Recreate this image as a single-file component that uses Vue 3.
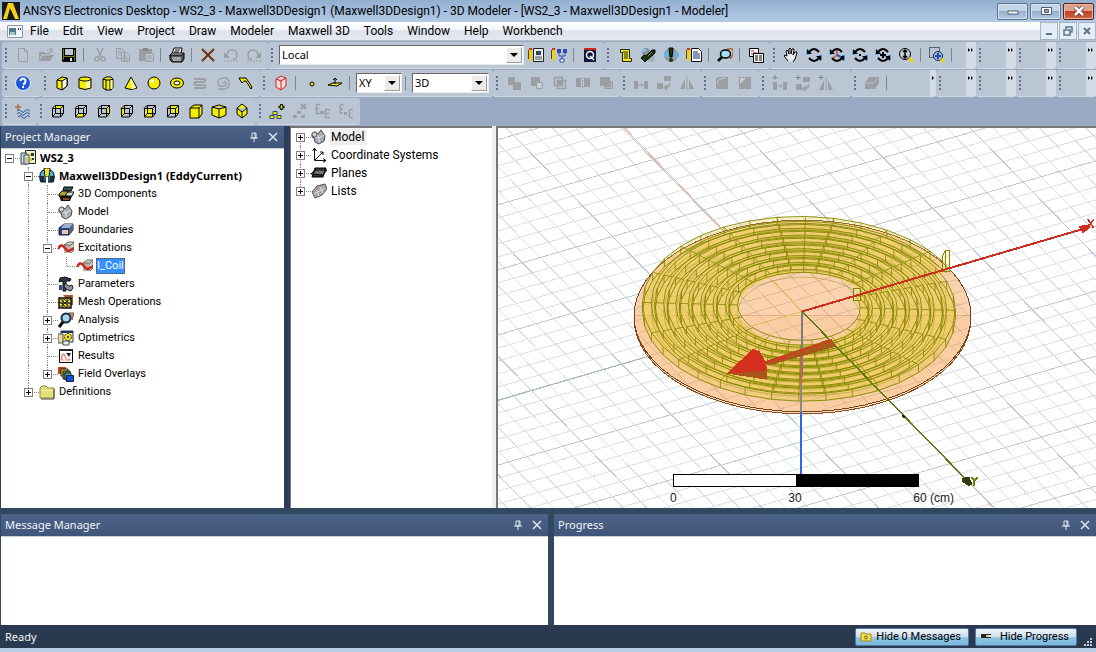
<script setup>
const G = '#9b9fa3'
const Y = '#f4f000'

const wire = (fill) =>
  `${fill}<path d="M2 5.5L5 2.500H13.500V10.500L10.500 14H2.500V5.500H10.500V14M10.500 5.500L13.500 2.500M5.500 2.500V10.500H13M2.500 13.500L5.500 10.500" fill="none" stroke="#000"/>`
const pencil = '<path d="M1 2h3v10l-1.500 3L1 12z" fill="#f7d000"/><path d="M1 1h3v2H1z" fill="#c33"/><path d="M.500 3v9" stroke="#444" fill="none"/>'
const coilWave = '<path d="M6 5l4-3h6l-3 3v8H6z" fill="#b9b0a6"/><path d="M6 5l4-3h6l-3 3zM13 5l3-3v8l-3 3" fill="#d8d0c8" stroke="#666"/><path d="M0 9q3-6 6-2t5 4l5-3" stroke="#c6281c" stroke-width="2.500" fill="none"/>'
const lump = '<path d="M1 5l3-2 3 2 3-4 4 6-1 5-5 3-4-2-1-4-2-1z" fill="#a9adb3" stroke="#44484e"/><path d="M4 8l4 1 5-3M8 9v5M6 5l2 4" stroke="#dfe3e8" fill="none"/><circle cx="3.500" cy="5.500" r="2.500" fill="#ccd0d6" stroke="#555"/>'
const rotate = (mid) =>
  `<path d="M0 3h3v5H0z" fill="#58b4ea"/><path d="M13 8h3v5h-3z" fill="#3a8ee0"/><path d="M3 5q5-6 10 0M13 11q-5 6-10 0" stroke="#000" stroke-width="2" fill="none"/><path d="M1 2v5h5zM15 14V9h-5z" fill="#000"/>${mid}`
const plus = '<path d="M3 0v5M0.500 2.500h5" stroke="#7f858c" fill="none"/>'

const icons = {
  fresh: `<path d="M3.500 1.500h6l3 3v10h-9zM9.500 1.500v3h3" fill="none" stroke="${G}"/>`,
  open: `<path d="M1 14V5h5l1 1h5v2h4l-4 6z" fill="${G}"/><path d="M2 12l2-4h8" stroke="#c3ccd6" fill="none"/><path d="M9 4q3-4 5 0M14 1v4h-3" fill="none" stroke="${G}"/>`,
  save: '<path d="M1 1h14v14H2l-1-1z" fill="#000"/><path d="M4 2h8v6H4z" fill="#bcc7d6"/><path d="M2 2h1v11H2zM13 3h1v11h-1zM3 9h10v1H3z" fill="#7c7c00"/><path d="M9 11h2v3H9z" fill="#dde"/>',
  cut: `<path d="M5 1l4 9M11 1L7 10" stroke="${G}" stroke-width="1.500"/><circle cx="5" cy="12" r="2" fill="none" stroke="${G}" stroke-width="1.500"/><circle cx="11" cy="12" r="2" fill="none" stroke="${G}" stroke-width="1.500"/>`,
  copy: `<path d="M1.500 1.500h5l3 3v7h-8zM6.500 5.500h5l3 3v6h-8z" fill="#bcc7d3" stroke="${G}"/><path d="M3 4h3M3 6h3M3 8h3M8 9h4M8 11h5M8 13h5" stroke="${G}"/>`,
  paste: `<path d="M1 2h13v12H1z" fill="${G}"/><path d="M5 1h5v3H5z" fill="#888"/><path d="M7.500 6.500h8v8h-8z" fill="#bcc7d3" stroke="${G}"/><path d="M9 9h5M9 11h5M9 13h3" stroke="${G}"/>`,
  print: '<path d="M5 1h8l-1 6H3z" fill="#fff" stroke="#000"/><path d="M6 3h5M5 5h5" stroke="#000"/><path d="M1 8l2-2h12l-2 3H1z" fill="#ddd" stroke="#000"/><path d="M1 8h12l2-2v6l-2 3H3l-2-2z" fill="#555" stroke="#000"/><path d="M3 11h9M4 13h8" stroke="#eee"/>',
  remove: '<path d="M2 2l12 12M14 2L2 14" stroke="#6b3010" stroke-width="2"/>',
  undo: `<path d="M4 9q0-6 5-6t5 5-4 4" fill="none" stroke="${G}" stroke-width="1.500"/><path d="M1 5v6h6z" fill="${G}"/><path d="M1 14h14" stroke="${G}" stroke-dasharray="2 1"/>`,
  redo: `<path d="M12 9q0-6-5-6T2 8t4 4" fill="none" stroke="${G}" stroke-width="1.500"/><path d="M15 5v6H9z" fill="${G}"/><path d="M1 14h14" stroke="${G}" stroke-dasharray="2 1"/>`,
  props: `${pencil}<path d="M5.500 1.500h10v13h-10z" fill="#e8eef4" stroke="#222"/><path d="M8 4h5v4H8z" fill="#345"/><path d="M7 10h7M7 12h7" stroke="#555"/>`,
  tree: `${pencil}<path d="M6 2h4v4H6zM12 2h4v4h-4z" fill="#2c4fae"/><path d="M8 6v3h6V6M11 9v4" stroke="#2c4fae" fill="none"/><path d="M9 12h4v3H9z" fill="#fff" stroke="#2c4fae"/>`,
  queue: '<path d="M2 1h12v14H2z" fill="#101840"/><path d="M2 1h12v2H2z" fill="#d02818"/><circle cx="8" cy="8" r="3.500" fill="none" stroke="#fff" stroke-width="1.500"/><path d="M8 9l4 4" stroke="#fff" stroke-width="1.500"/>',
  script: '<path d="M3.500 2.500h9v9h2v3h-9v-9h-2z" fill="#f3ea10" stroke="#222"/><path d="M6 5h5M7 7h4M7 9h4M7 11h4" stroke="#222"/>',
  validate: '<circle cx="6" cy="5" r="4" fill="#8f9298"/><circle cx="11" cy="11" r="4" fill="#a4b0ba"/><path d="M2 2h4v3H2z" fill="#7cc4e4"/><path d="M1 11l3-3 2 1 6-6h3v3l-8 7-2 2z" fill="#1d3417" stroke="#000"/><path d="M8 9l4-4" stroke="#5a9a40"/>',
  analyze: '<circle cx="8" cy="8" r="7" fill="#929aa2"/><path d="M1 5h4v5H1zM12 5h4v5h-4z" fill="#5cb8e6"/><path d="M6 1h4l-1 9H7z" fill="#183818" stroke="#000"/><circle cx="8" cy="13" r="2" fill="#183818"/>',
  notes: `${pencil}<path d="M5.500 1.500h7l3 3v10h-10z" fill="#fff" stroke="#111"/><path d="M7 5h5M7 7h7M7 9h7M7 11h7" stroke="#112a70"/>`,
  results: '<path d="M10 2h6v6l-3 4" fill="#c8d0d8" stroke="#b0602c" stroke-width="1.500"/><ellipse cx="8.500" cy="7" rx="5" ry="4" fill="#a4dcf0" stroke="#000" stroke-width="1.500"/><path d="M5 10l-4 4" stroke="#000" stroke-width="2.500"/>',
  report: '<path d="M1.500 1.500h9v8h-9z" fill="#fff" stroke="#000"/><path d="M3 4h3M5 6h4" stroke="#d02020"/><path d="M3 7h4" stroke="#2050c0"/><path d="M5.500 6.500h10v9h-10z" fill="#fff" stroke="#000"/><path d="M7 9h3M11 9h3M7 11h3M11 11h3M7 13h3M11 13h3" stroke="#000"/>',
  pan: '<path d="M5 14L1 9q0-2 3 0L3 4q1-2 2 0l1 3V2q1-2 2 0v5l1-5q2-1 2 1l-1 5 2-3q2-1 2 1l-2 6-2 3" fill="#e6ecf2" stroke="#000"/>',
  rot1: rotate(''),
  rot2: rotate('<path d="M8 8V3M8 8l-4 3" stroke="#c6501c" stroke-width="1.500"/><path d="M8 8l4 2" stroke="#2858c0" stroke-width="2"/>'),
  rot3: rotate('<path d="M7 7h2v2H7z"/>'),
  rot4: rotate('<path d="M8 5v6M5 8h6" stroke="#000" stroke-width="2"/>'),
  zoomer: '<circle cx="7" cy="7" r="5.500" fill="#c3ced8" stroke="#000"/><path d="M7 3v8M5 5l2-2 2 2M5 9l2 2 2-2" stroke="#000" stroke-width="1.500" fill="none"/><path d="M11 11l4 4" stroke="#e8d800" stroke-width="3"/>',
  fit: '<path d="M.500.500h10v10H.500z" fill="none" stroke="#000" stroke-dasharray="1 1"/><circle cx="9" cy="9" r="4.500" fill="#9ec2ee" stroke="#222"/><path d="M9 6v6M6 9h6" stroke="#2448b8" stroke-width="2"/><path d="M12 12l3 3" stroke="#e8d800" stroke-width="3"/>',
  help: '<circle cx="8" cy="8" r="7.500" fill="#1c55d8" stroke="#e4ecf6"/><path d="M5.500 6q0-2.500 2.500-2.500T10.500 6 8 9.500" stroke="#fff" stroke-width="2" fill="none"/><path d="M7 11h2v2H7z" fill="#fff"/>',
  box: `<path d="M3 5l5-3 5 1v8l-5 4-5-2z" fill="${Y}" stroke="#000"/><path d="M8 6v9l5-4V3z" fill="#fffce0" stroke="#000"/><path d="M3 5l5 1" stroke="#000"/>`,
  cyl: `<path d="M2 4v9q6 3 12 0V4z" fill="${Y}" stroke="#000"/><path d="M9 5h4v8H9z" fill="#f9f7b0"/><ellipse cx="8" cy="4" rx="6" ry="2" fill="${Y}" stroke="#000"/>`,
  poly: `<path d="M3 4v9l3 2h5l2-2V4z" fill="${Y}" stroke="#000"/><path d="M6 5v10M10 5v10" stroke="#000"/><path d="M10.500 5h2v9h-2z" fill="#f9f7b0"/><path d="M3 4l3-2h5l2 2-3 1H6z" fill="${Y}" stroke="#000"/>`,
  cone: `<path d="M8 2L2 13q6 3 12 0z" fill="${Y}" stroke="#000"/><path d="M8 3l1 11 4-1z" fill="#fffcd0"/>`,
  sphere: `<circle cx="8" cy="8" r="6" fill="${Y}" stroke="#000"/><circle cx="6" cy="6" r="2" fill="#fffcd0"/>`,
  torus: `<ellipse cx="8" cy="8" rx="6.500" ry="5" fill="${Y}" stroke="#000"/><ellipse cx="8" cy="8" rx="3" ry="2" fill="#fff" stroke="#000"/>`,
  helix: `<path d="M2 4h10q3 1 0 3H3q-2 2 1 3h8q3 1 0 3H2" fill="none" stroke="${G}" stroke-width="2"/>`,
  spiral: `<path d="M8 8q2-2 3 0t-3 3-5-3 5-5 6 5-6 6H3" fill="none" stroke="${G}" stroke-width="1.500"/>`,
  sweep: `<path d="M1 3h7l6 9-1 2-5-8H6l-2 2z" fill="${Y}" stroke="#000"/>`,
  redbox: '<path d="M3 4l5-3 5 2v8l-5 4-5-3zM3 4l5 2 5-3M8 6v9" fill="#f6dede" stroke="#e01818"/>',
  point: `<circle cx="8" cy="9" r="2" fill="${Y}" stroke="#000"/>`,
  plane: `<path d="M1 10l5-2h9l-5 3z" fill="${Y}" stroke="#000"/><path d="M8 9V3M6 5l2-2 2 2" stroke="#000" fill="none"/>`,
  unite: `<path d="M2 2h7v5h6v8H7v-5H2z" fill="${G}"/>`,
  subtract: `<path d="M2 2h9v9H2z" fill="${G}"/><path d="M7.500 7.500h6v6h-6z" fill="#c6cfd8" stroke="${G}"/>`,
  intersect: `<path d="M2.500 2.500h8v8h-8zM5.500 5.500h8v8h-8z" fill="none" stroke="${G}" stroke-width="1.500"/><path d="M6 6h4v4H6z" fill="${G}"/>`,
  split: `<path d="M1 3h5v9H1zM9 3h6v9H9z" fill="${G}"/><path d="M7.500 2v12" stroke="${G}" stroke-dasharray="2 1"/>`,
  imprint: `<path d="M2 2h10v9H2z" fill="${G}"/><path d="M6.500 11.500h6v-5h2v7h-8z" fill="#adb3b8" stroke="${G}"/>`,
  move: `<path d="M1 6h4v8H1zM11 6h4v8h-4z" fill="${G}"/><path d="M5 10h5M8 8l2 2-2 2" fill="none" stroke="${G}"/>`,
  turn: `<path d="M8 1h7v5H8zM1 8h6v6H1z" fill="${G}"/><path d="M14 8q-1 5-5 5M11 10l-3 3 3 2" fill="none" stroke="${G}" stroke-width="1.500"/>`,
  mirror: `<path d="M6 4v10H1zM10 4v10h5z" fill="${G}"/><path d="M8 2v13" stroke="${G}"/>`,
  fillet: `<path d="M2 3q4-2 12-1v12H2z" fill="${G}"/><path d="M3 8q2-5 8-5" stroke="#c6cfd8" fill="none"/>`,
  chamfer: `<path d="M2 2h12v12H2z" fill="${G}"/><path d="M3 9l6-6H3z" fill="#c6cfd8"/>`,
  surf: `<path d="M5 2h10v6l-4 6H1V8z" fill="${G}"/><path d="M2 8h8l4-5" stroke="#b8c0c8" fill="none"/>`,
  wave: '<path d="M3 1v6M0 4h6" stroke="#a0501c"/><path d="M2 8q2-3 4 0t4 0 5 0M2 11q2-3 4 0t4 0 5 0M3 14q2-3 4 0t4 0 4 0" fill="none" stroke="#2858a0"/>',
  v1: wire(`<path d="M3 5l3-3h8l-3 4H3z" fill="${Y}"/>`),
  v2: wire(`<path d="M3 13l3-3h7l-3 4H3z" fill="${Y}"/>`),
  v3: wire(`<path d="M10 5l4-3v9l-4 3z" fill="${Y}"/>`),
  v4: wire(`<path d="M2 5l4-3v9l-4 3z" fill="${Y}"/>`),
  v5: wire(`<path d="M2 5h9v9H2z" fill="${Y}"/>`),
  v6: wire(`<path d="M5 2h9v9H5z" fill="${Y}"/>`),
  v7: `<path d="M2 5l4-3h8v9l-3 4H2z" fill="${Y}" stroke="#000"/><path d="M2 5h9v10M11 5l3-3" stroke="#000" fill="none"/>`,
  v8: `<path d="M1 4l7-2 7 2v8l-7 3-7-3zM1 4l7 2 7-2M8 6v9" fill="${Y}" stroke="#000"/>`,
  v9: `<path d="M3 5l5-4 5 4v6l-5 4-5-4zM3 5l5 4 5-4M8 9v6" fill="${Y}" stroke="#000"/>`,
  addNode: `<path d="M12.500 1v6M9.500 4h6" stroke="#000" stroke-width="2.500"/><path d="M12.500 2v4M10.500 4h4" stroke="#c8c800"/><path d="M4 8.500h4v3H4zM1 12.500h4v3H1zM8 12.500h4v3H8z" fill="${Y}" stroke="#345"/>`,
  delNode: `<path d="M9 1l5 5M14 1L9 6" stroke="${G}" stroke-width="2"/><path d="M5 8h4v3H5zM1 12h4v3H1zM9 12h4v3H9z" fill="${G}"/>`,
  exp1: `<path d="M1.500 1v10M1 1.500h4M1 6h3M1 10.500h4M10.500 6v9M10 6.500h5M10 10.500h4M10 14.500h5" fill="none" stroke="${G}" stroke-width="1.500"/><path d="M5 8h4v3H5z" fill="${G}"/>`,
  exp2: `<path d="M6 1.500H4L2 3v2l2 1-2 1v3h3M15 6.500h-3l-1 2 1 2-1 2 1 2h3" fill="none" stroke="${G}" stroke-width="1.500"/><path d="M6 9h3v3H6z" fill="${G}"/>`,
  project: '<path d="M5.500.500h10v13h-10z" fill="#f4f2c8" stroke="#223"/><path d="M1 3h6v11H1z" fill="#c4dcdc" stroke="#345"/><path d="M4 5h5v9H4z" fill="#eef" stroke="#345"/><path d="M5 8h3M5 10h3M5 12h3" stroke="#a8a020"/><path d="M11 3h3v3h-3zM12 8h2v2h-2z" fill="#333"/><path d="M9 4h2v2H9zM10 8h2v3h-2z" fill="#d8c800"/>',
  design: '<path d="M1 8q0-6 5-6h1v12H2zM15 8q0-6-5-6H9v12h5z" fill="#4ab0dc" stroke="#000"/><path d="M5 0h6l-1 9H6z" fill="#f0e030" stroke="#222"/><path d="M0 8h5l1 6H1zM11 8h5l-1 6h-5z" fill="#1d2a3a"/><path d="M7 9h2v6H7z" fill="#fff"/>',
  components: '<path d="M6 1h9l-2 4H5z" fill="#2e5a50" stroke="#000"/><path d="M1 8l3-3h6l-2 5H1z" fill="#a8a820" stroke="#000"/><path d="M8 8l2-2h6l-2 4H8z" fill="#dcdcdc" stroke="#000"/><path d="M1 10h13l-2 5H3z" fill="#111"/><path d="M5 12h6v2H5z" fill="#8a4a20"/>',
  model: lump,
  boundary: '<path d="M1 6l5-4h9v6l-4 5H1z" fill="#24407c" stroke="#1a2a50"/><path d="M6 2h9l-3 4H3z" fill="#9ab4d8"/><path d="M4 8h6v4H4z" fill="#f0c8b0"/><path d="M11 6l4-4v6l-4 5z" fill="#59606e"/>',
  excite: coilWave,
  params: '<path d="M2 2l5-1 6 2-1 2H8v10H5V5L1 6z" fill="#28384a" stroke="#111"/><path d="M7 7l4 3 3-1 1 3-2 3-3-1-4-3z" fill="#8a949e" stroke="#222"/><path d="M1 9h3v5H1z" fill="#2c4a8c"/>',
  mesh: '<path d="M5 1h10v10h-2" fill="#a05c30"/><path d="M1 4h12v10H1z" fill="#f0e840" stroke="#111" stroke-width="1.500"/><path d="M1 9h12M5 4v10M9 4v10M1 4l12 10M13 4L1 14M5 4l8 7M1 7l8 7" stroke="#222" fill="none"/>',
  analysis: '<path d="M10 1h6l-2 7" fill="#c49a80" stroke="#764a30"/><circle cx="8" cy="6" r="4.500" fill="#a8d4ee" stroke="#1c2c3c" stroke-width="2"/><path d="M5 10l-4 5" stroke="#111" stroke-width="3"/>',
  opti: '<path d="M3 1h12v11H3z" fill="#f2eec0" stroke="#24365c"/><path d="M3 1h12v2H3z" fill="#24365c"/><path d="M0 4h5v9H0z" fill="#e8d890" stroke="#555"/><path d="M5 11h6v4H5z" fill="#e8f0f4" stroke="#355"/><circle cx="10" cy="7" r="3.500" fill="#f0e020" stroke="#222" stroke-dasharray="2 1"/><circle cx="10" cy="7" r="1" fill="#222"/>',
  plot: '<path d="M1.500 1.500h13v13h-13z" fill="#fff" stroke="#000"/><path d="M1 1h14v2H1z" fill="#223"/><path d="M3 12q2-10 4-4t5 3" fill="none" stroke="#d05030"/><path d="M8 5l3 4 2-4" fill="#222"/><path d="M4 6v7M3 12h10" stroke="#e8a088"/>',
  overlay: '<path d="M0 1h8v7H0z" fill="#c4421c"/><path d="M3 3h7v7H3z" fill="#e6cc10" stroke="#222"/><path d="M5 5h7v8H5z" fill="#4a8a50" stroke="#222"/><path d="M7 7h6v7H7z" fill="#50a8d8" stroke="#222"/><path d="M8.500 9.500h7v6h-7z" fill="#1450d8" stroke="#123"/>',
  folder: '<path d="M1 4l2-2h4l2 2h6v10H1z" fill="#e4de78" stroke="#8a8640"/><path d="M2 6h12v1H2z" fill="#f8f4b8"/><path d="M15 5v10H2" stroke="#444" fill="none"/>',
  axes: '<path d="M3.500 1v12.500H15M1.500 4l2-3 2 3M12 11.500l3 2-3 2M4 13l8-8M9 5h3v3" fill="none" stroke="#111"/>',
  planes: '<path d="M4 3h11l-3 9H1z" fill="#30363a" stroke="#000"/><path d="M5 5h8M4 7h9M3 9h9" stroke="#aab4b0"/><path d="M0 9l4-4h12l-4 5z" fill="none" stroke="#000"/>',
  lists: '<path d="M1 9l5-6 8-2 2 5-5 6-7 3z" fill="#a4a6a8" stroke="#555"/><path d="M5 6l3 7M9 4l3 6M3 11l11-6" stroke="#dcdcdc"/><path d="M3 9l5-5" stroke="#b86a40"/>',
}

const select = (label, value, size) => ({ select: true, label, value, size })
const sep = '|'
const rows = [
  {
    bands: [
      { items: ['fresh', 'open', 'save', sep, 'cut', 'copy', 'paste', sep, 'print', sep, 'remove', 'undo', 'redo'] },
      { items: [select('Coordinate system', 'Local', 'long'), 'props', 'tree', sep, 'queue'] },
      { items: ['script', 'validate', 'analyze', 'notes', sep, 'results', sep, 'report'] },
      { items: ['pan', 'rot1', 'rot2', 'rot3', 'rot4', 'zoomer', sep, 'fit', sep], grow: true, more: true },
      { items: [], more: true, small: true },
      { items: [], more: true, small: true },
      { items: [], more: true, small: true },
    ],
  },
  {
    bands: [
      { items: ['help'], roomy: true },
      { items: ['box', 'cyl', 'poly', 'cone', 'sphere', 'torus', 'helix', 'spiral', 'sweep'] },
      { items: ['redbox', sep, 'point', 'plane', sep, select('Drawing plane', 'XY', 'short'), sep, select('Movement mode', '3D', 'medium')] },
      { items: ['unite', 'subtract', 'intersect', 'split', 'imprint'] },
      { items: ['move', 'turn', 'mirror'] },
      { items: ['fillet', 'chamfer'] },
      { items: ['+move', '+turn', '+mirror'], loose: true },
      { items: ['surf', sep], grow: true, more: true, single: true },
      { items: [], more: true, small: true },
      { items: [], more: true, small: true },
      { items: [], more: true, small: true },
      { items: [], more: true, small: true },
    ],
  },
  {
    bands: [
      { items: ['wave'] },
      { items: ['v1', 'v2', 'v3', 'v4', 'v5', 'v6', 'v7', 'v8', 'v9'] },
      { items: ['addNode', 'delNode', 'exp1', 'exp2'] },
    ],
  },
]
const glyph = (name) => (name[0] === '+' ? plus + `<g transform="translate(0 1)">${icons[name.slice(1)]}</g>` : icons[name])

const menus = ['File', 'Edit', 'View', 'Project', 'Draw', 'Modeler', 'Maxwell 3D', 'Tools', 'Window', 'Help', 'Workbench']

// Guide cells: e = empty, v = passing line, t = branch, l = last branch; a sign adds an expander.
const projectTree = [
  { cells: ['o-'], icon: 'project', text: 'WS2_3', bold: true },
  { cells: ['e', 't-'], icon: 'design', text: 'Maxwell3DDesign1 (EddyCurrent)', bold: true },
  { cells: ['e', 'v', 't'], icon: 'components', text: '3D Components' },
  { cells: ['e', 'v', 't'], icon: 'model', text: 'Model' },
  { cells: ['e', 'v', 't'], icon: 'boundary', text: 'Boundaries' },
  { cells: ['e', 'v', 't-'], icon: 'excite', text: 'Excitations' },
  { cells: ['e', 'v', 'v', 'l'], icon: 'excite', text: 'I_Coil', selected: true },
  { cells: ['e', 'v', 't'], icon: 'params', text: 'Parameters' },
  { cells: ['e', 'v', 't'], icon: 'mesh', text: 'Mesh Operations' },
  { cells: ['e', 'v', 't+'], icon: 'analysis', text: 'Analysis' },
  { cells: ['e', 'v', 't+'], icon: 'opti', text: 'Optimetrics' },
  { cells: ['e', 'v', 't'], icon: 'plot', text: 'Results' },
  { cells: ['e', 'v', 'l+'], icon: 'overlay', text: 'Field Overlays' },
  { cells: ['e', 'l+'], icon: 'folder', text: 'Definitions' },
]
const modelTree = [
  { cells: ['b+'], icon: 'model', text: 'Model', current: true },
  { cells: ['t+'], icon: 'axes', text: 'Coordinate Systems' },
  { cells: ['t+'], icon: 'planes', text: 'Planes' },
  { cells: ['l+'], icon: 'lists', text: 'Lists' },
]
const trees = [projectTree, modelTree]

// Scene projection: world x/y in major grid units, z in pixels upwards.
const O = [802, 311]
const U = [90, -26.2]
const V = [49.5, 50.5]
const at = (x, y, z = 0) => [O[0] + x * U[0] + y * V[0], O[1] + x * U[1] + y * V[1] - z]
const fmt = (p) => `${p[0].toFixed(1)} ${p[1].toFixed(1)}`
const line = (a, b) => `M${fmt(a)}L${fmt(b)}`

let minor = ''
let major = ''
for (let i = -50; i <= 50; i++) {
  const d = line(at(i / 5, -10), at(i / 5, 10)) + line(at(-10, i / 5), at(10, i / 5))
  if (i % 5) minor += d
  else major += d
}

const SEG = 36
const TURNS = 8
const PITCH = 0.12
const WIDTH = 0.085
const HEIGHT = 8
const radius = (k) => 1.6 - (PITCH * k) / SEG
const polar = (r, k, z) => {
  const a = (-2 * Math.PI * k) / SEG
  return at(r * Math.cos(a), r * Math.sin(a), z)
}
const base = -3
const top = base + HEIGHT
const spiral = (w, z) => {
  let d = ''
  for (let k = 0; k <= SEG * TURNS; k++) d += (k ? 'L' : 'M') + fmt(polar(radius(k) - w, k, z))
  return d
}
const coil = spiral(0, top) + spiral(0, base) + spiral(WIDTH, top)
let posts = ''
for (let k = 0; k <= SEG * TURNS; k++) {
  const r = radius(k)
  posts += line(polar(r, k, base), polar(r, k, top))
  if (k % 2) posts += line(polar(r, k, top), polar(r - WIDTH, k, top))
}
const inner = spiral(WIDTH, base)
const ring = (from, w, z) => {
  let d = ''
  for (let k = from; k <= from + SEG; k++) d += (k > from ? 'L' : 'M') + fmt(polar(radius(k) - w, k, z))
  return d + 'Z'
}
const hole = ring(SEG * (TURNS - 1), WIDTH, 1)
const coilTop = ring(0, 0, top) + hole
const coilBase = ring(0, 0, base) + hole
const ticks = ['0', '30', '60 (cm)']
</script>

<template>
  <div class="desktop">
    <header class="title">
      <svg class="logo" viewBox="0 0 18 18"><rect width="18" height="18" fill="#181818" /><path d="M1 17L6 1h5l6 16h-5L8 6 5 17z" fill="#f5d21a" /><path d="M9 8l4 9H6z" fill="#181818" /></svg>
      <h1>ANSYS Electronics Desktop - WS2_3 - Maxwell3DDesign1 (Maxwell3DDesign1) - 3D Modeler - [WS2_3 - Maxwell3DDesign1 - Modeler]</h1>
      <div class="winbtns">
        <button aria-label="Minimize"><svg viewBox="0 0 28 14"><rect x="9" y="7" width="10" height="3" fill="#fff" stroke="#4d5c70" /></svg></button>
        <button aria-label="Maximize"><svg viewBox="0 0 28 14"><path d="M9.500 3.500h10v7h-10z" fill="#fff" stroke="#4d5c70" /><path d="M12.500 5.500h4v3h-4z" fill="#8fa8c6" stroke="#4d5c70" /></svg></button>
        <button class="close" aria-label="Close"><svg viewBox="0 0 28 14"><path d="M10 3l8 8M18 3l-8 8" stroke="#5a3030" stroke-width="4" /><path d="M10 3l8 8M18 3l-8 8" stroke="#fff" stroke-width="2.500" /></svg></button>
      </div>
    </header>

    <nav class="menubar">
      <svg class="docicon" viewBox="0 0 16 13"><path d="M.500.500h15v12H.500z" fill="#f4f7fa" stroke="#8d99a6" /><path d="M2 3h7v7H2z" fill="#4e7a8c" /><path d="M3 7h5v3H3z" fill="#a8c8c0" /><path d="M11 3h1v2h-1zM13 3h1v2h-1z" fill="#345" /></svg>
      <button v-for="m in menus" :key="m">{{ m }}</button>
      <div class="docbtns">
        <button aria-label="Minimize document"><svg viewBox="0 0 16 16"><path d="M5 11h6" stroke="#5e7389" stroke-width="2" /></svg></button>
        <button aria-label="Restore document"><svg viewBox="0 0 16 16"><path d="M6 6V4h6v5h-2M4 7h6v5H4z" fill="none" stroke="#5e7389" stroke-width="1.500" /></svg></button>
        <button aria-label="Close document"><svg viewBox="0 0 16 16"><path d="M5 5l6 6M11 5l-6 6" stroke="#5e7389" stroke-width="2" /></svg></button>
      </div>
    </nav>

    <div class="toolbars">
      <div v-for="(row, r) in rows" :key="r" class="toolrow">
        <div v-for="(band, b) in row.bands" :key="b" class="band" :class="{ grow: band.grow, small: band.small, roomy: band.roomy, loose: band.loose }">
          <i class="grip"></i>
          <template v-for="(item, i) in band.items" :key="i">
            <i v-if="item === '|'" class="sep"></i>
            <span v-else-if="item.select" class="combo" :class="item.size">
              <select :aria-label="item.label"><option>{{ item.value }}</option></select>
            </span>
            <button v-else class="tool" :aria-label="item"><svg viewBox="0 0 16 16" v-html="glyph(item)"></svg></button>
          </template>
          <button v-if="band.more" class="more" :class="{ single: band.single }" aria-label="More buttons">
            <svg v-if="band.single" viewBox="0 0 6 4"><path d="M2 0v4l2-2z" /></svg>
            <svg v-else viewBox="0 0 6 4"><path d="M0 0v4l2-2zM3 0v4l2-2z" /></svg>
          </button>
        </div>
      </div>
    </div>

    <main class="work">
      <section class="pane project">
        <header class="bar"><h2>Project Manager</h2>
          <button aria-label="Pin"><svg viewBox="0 0 10 10"><path d="M3 1h4v5H3zM6 1v5M1 6h8M5 6v4" fill="none" stroke="#dfe6f0" /></svg></button>
          <button aria-label="Close"><svg viewBox="0 0 10 10"><path d="M1 1l8 8M9 1L1 9" stroke="#dfe6f0" stroke-width="1.500" /></svg></button>
        </header>
        <ul class="tree">
          <li v-for="n in trees[0]" :key="n.text" :class="{ bold: n.bold, selected: n.selected }">
            <span v-for="(c, i) in n.cells" :key="i" class="cell" :class="c[0]"><b v-if="c[1]" :class="{ plus: c[1] === '+' }"></b></span>
            <svg class="node" viewBox="0 0 16 16" v-html="icons[n.icon]"></svg><span class="label">{{ n.text }}</span>
          </li>
        </ul>
      </section>
      <section class="objects">
        <ul class="tree">
          <li v-for="n in trees[1]" :key="n.text" :class="{ current: n.current }">
            <span v-for="(c, i) in n.cells" :key="i" class="cell" :class="c[0]"><b v-if="c[1]" :class="{ plus: c[1] === '+' }"></b></span>
            <svg class="node" viewBox="0 0 16 16" v-html="icons[n.icon]"></svg><span class="label">{{ n.text }}</span>
          </li>
        </ul>
      </section>
      <section class="view">
        <svg class="scene" viewBox="498 128 598 379" preserveAspectRatio="xMidYMid slice">
          <g fill="none" shape-rendering="crispEdges">
            <path :d="minor" stroke="#dce1e3" />
            <path :d="major" stroke="#c3c7d6" />
            <path d="M802 311L498 400" stroke="#a3bda9" />
            <path d="M802 311L625 128M968 481L992 506" stroke="#e8bda4" />
          </g>
          <g shape-rendering="crispEdges">
            <path d="M634.500 315v3a168 95 0 0 0 336 0v-3z" fill="#fde0c0" stroke="#8a4a1c" />
            <ellipse cx="802.500" cy="315.500" rx="168" ry="95.500" fill="#f9c89c" fill-opacity=".82" stroke="#74401a" />
            <g clip-path="url(#disc)" fill="none" stroke="#b4906c" stroke-opacity=".3">
              <path :d="minor" />
              <path :d="major" />
            </g>
            <clipPath id="disc"><ellipse cx="802.500" cy="315.500" rx="166" ry="94" /></clipPath>
            <path :d="coilTop" fill="#f0d840" fill-opacity=".28" fill-rule="evenodd" />
            <path :d="coilBase" fill="#e6c830" fill-opacity=".3" fill-rule="evenodd" />
            <g fill="none" stroke="#858600" shape-rendering="geometricPrecision">
              <path :d="inner" stroke-opacity=".5" stroke-width=".8" />
              <path :d="coil" stroke-width=".9" />
              <path :d="posts" stroke-width=".8" />
            </g>
            <path d="M942 256l3-6h4v21h-7zM945 250v18M853 288h7v12h-7z" fill="#f4f0b0" fill-opacity=".4" stroke="#858600" />
            <path d="M802 311l-27-29M802 311l-55 16" stroke="#dcbc60" fill="none" />
            <path d="M802 311v65" stroke="#7b7b80" stroke-width="2" />
            <path d="M801 350v34" stroke="#b86a50" stroke-width="2" />
            <path d="M801 384v27" stroke="#8a8a80" stroke-width="2" />
            <path d="M801 411v64" stroke="#2e68e6" stroke-width="2" />
            <path d="M802 311l166 170" stroke="#5f7a10" stroke-width="1.500" />
            <path d="M902 414l2 3" stroke="#111" stroke-width="2" />
            <path d="M764 361l67-23 5 8-68 19z" fill="#a85a18" />
            <path d="M766 362l68-23M768 361l20-4" stroke="#d23a24" stroke-width="2" stroke-dasharray="9 3" />
            <path d="M727 373l40-8v14z" fill="#a8541a" />
            <path d="M727 373l26-25 7 3 6 11v8z" fill="#d43020" />
            <path d="M802 311l286-84" stroke="#d02c1e" stroke-width="2" />
            <path d="M1078 226l10-2 1 4-7 5z" fill="#d02c1e" />
            <path d="M1087 219l6 9M1093 219l-6 9" stroke="#d02c1e" stroke-width="1.500" />
            <path d="M962 477l7-1 3 8-4 1-6-4z" fill="#2c3c10" />
            <path d="M971 476l3 4 3-4M974 480v5" fill="none" stroke="#6f8010" stroke-width="2" />
          </g>
        </svg>
        <div class="scale">
          <div class="rule"><i></i><i></i></div>
          <div class="ticks"><span v-for="t in ticks" :key="t">{{ t }}</span></div>
        </div>
      </section>
    </main>

    <div class="docked">
      <section v-for="name in ['Message Manager', 'Progress']" :key="name" class="pane">
        <header class="bar"><h2>{{ name }}</h2>
          <button aria-label="Pin"><svg viewBox="0 0 10 10"><path d="M3 1h4v5H3zM6 1v5M1 6h8M5 6v4" fill="none" stroke="#dfe6f0" /></svg></button>
          <button aria-label="Close"><svg viewBox="0 0 10 10"><path d="M1 1l8 8M9 1L1 9" stroke="#dfe6f0" stroke-width="1.500" /></svg></button>
        </header>
      </section>
    </div>

    <footer class="status">
      <span>Ready</span>
      <button class="messages"><svg viewBox="0 0 12 10"><path d="M1 1h4l1 1h5v7H1z" fill="#f4e04c" stroke="#a08a20" /><circle cx="6" cy="5.500" r="1.500" fill="none" stroke="#776010" /></svg>Hide 0 Messages</button>
      <button><svg viewBox="0 0 12 10"><path d="M1 2h10v4H1z" fill="#222" /><path d="M6 3h2v2H6z" fill="#e8d030" /><path d="M8 3h3v2H8z" fill="#dde" /></svg>Hide Progress</button>
      <svg class="sizer" viewBox="0 0 10 10"><path d="M7 0h2v2H7zM4 3h2v2H4zM7 3h2v2H7zM1 6h2v2H1zM4 6h2v2H4zM7 6h2v2H7z" fill="#c3cbd6" /></svg>
    </footer>
  </div>
</template>

<style>
body { margin: 0; }
</style>

<style scoped>
.desktop {
  display: flex; flex-direction: column; height: 100vh; overflow: hidden;
  box-sizing: border-box; border-bottom: 4px solid #b9cde8;
  background: #304860; color: #000;
  font: 12px/18px "Noto Sans", "Open Sans", sans-serif;
}
button { border: 0; padding: 0; margin: 0; background: none; font: inherit; color: inherit; white-space: nowrap; }
h1, h2 { margin: 0; font: inherit; white-space: nowrap; }
ul { list-style: none; margin: 0; padding: 0; }
svg { display: block; flex: none; }

.title { display: flex; align-items: center; flex: 0 0 22px; padding-left: 2px; background: linear-gradient(#93afcf, #b4cbe8); }
.logo { width: 18px; height: 18px; }
.title h1 { flex: 1; margin-left: 3px; font-family: Roboto, sans-serif; }
.winbtns { display: flex; gap: 2px; padding-right: 2px; }
.winbtns button { width: 31px; height: 17px; border: 1px solid #5d708a; border-radius: 2px; background: linear-gradient(#c4d5e8 45%, #98b0cc 50%, #b4cae2); box-shadow: inset 0 0 0 1px #d6e3f1; }
.winbtns button svg { width: 28px; height: 14px; margin: auto; }
.winbtns .close { border-color: #541f1c; background: linear-gradient(#e0a08c 45%, #c0401c 50%, #d06848); box-shadow: inset 0 0 0 1px #e8b8a4; }

.menubar { display: flex; align-items: center; flex: 0 0 18px; padding-left: 7px; border-bottom: 1px solid #b9bfc8; background: linear-gradient(#fff, #f4f6fa 40%, #dde2ec 50%, #e3e8f1); font-family: Roboto, sans-serif; }
.docicon { width: 16px; height: 13px; }
.menubar > button { margin-left: 7px; margin-right: 7px; }
.docbtns { display: flex; gap: 1px; margin-left: auto; }
.docbtns button { width: 18px; height: 18px; border: 1px solid #a9b4c1; background: #e2edf7; }
.docbtns svg { width: 16px; height: 16px; }

.toolbars { flex: 0 0 85px; background: #9aaac2; }
.toolrow { display: flex; height: 28px; padding-left: 2px; }
.band { display: flex; align-items: center; flex: none; box-sizing: border-box; height: 27px; margin-top: 1px; padding-right: 3px; border-radius: 3px; background: #bac6d3; border-bottom: 1px solid #d0d9e3; }
.band.roomy { padding-right: 7px; }
.band.loose { padding-right: 14px; }
.band.grow { flex: 1; padding-right: 0; }
.band.small { flex: 0 0 40px; padding-right: 0; }
.grip { flex: 0 0 9px; height: 14px; background: repeating-linear-gradient(#5f7390 0 2px, transparent 2px 4px) 3px 0 / 2px 100% no-repeat; }
.sep { flex: 0 0 1px; height: 14px; margin: 0 4px 0 3px; background: #7c8896; }
.tool { flex: 0 0 23px; height: 24px; display: flex; align-items: center; justify-content: center; }
.tool svg { width: 16px; height: 16px; }
.more { display: flex; justify-content: center; align-self: stretch; width: 10px; margin-left: auto; padding-top: 6px; background: #d3dce6; }
.more svg { width: 6px; height: 4px; }
.more.single { width: 6px; }
.combo { position: relative; margin-left: 2px; }
.combo::after { content: ""; position: absolute; right: 2px; top: 2px; width: 14px; height: 14px; border: 1px solid #9a9a9a; border-top-color: #fff; border-left-color: #fff; background: #ececea; pointer-events: none; }
.combo::before { content: ""; position: absolute; z-index: 1; right: 6px; top: 8px; border: 4px solid transparent; border-top-color: #000; border-bottom: 0; pointer-events: none; }
.combo select { appearance: none; display: block; width: 100%; height: 20px; padding: 0 2px; border: 1px solid #666; border-right-color: #e8ecf0; border-bottom-color: #e8ecf0; border-radius: 0; background: #fff; font: inherit; font-size: 11px; color: #000; outline: none; }
.long { width: 245px; }
.short { width: 46px; }
.medium { width: 77px; margin-right: 1px; }

.work { display: flex; flex: 1; min-height: 0; gap: 6px; padding-left: 1px; background: #2b3d5a; }
.pane { display: flex; flex-direction: column; background: #fff; }
.bar { display: flex; align-items: center; flex: 0 0 22px; padding: 0 6px 0 4px; background: linear-gradient(#4c6488, #40557a); border-bottom: 1px solid #c8cdd4; color: #f2f5fa; }
.bar h2 { flex: 1; font-size: 11px; }
.bar svg { width: 10px; height: 10px; margin-left: 9px; }
.project { flex: 0 0 283px; }
.tree li { display: flex; align-items: center; height: 18px; white-space: nowrap; font-family: Roboto, sans-serif; font-size: 11px; }
.tree .bold { font-family: "Noto Sans", sans-serif; font-weight: 700; }
.objects .tree li { font-size: 12px; }
.cell { position: relative; flex: 0 0 19px; height: 18px; }
.cell::before { content: ""; position: absolute; left: 8px; top: 0; height: 18px; border-left: 1px dotted #888; }
.cell::after { content: ""; position: absolute; left: 9px; right: 0; top: 9px; border-top: 1px dotted #888; }
.e::before, .e::after, .v::after, .o::before { display: none; }
.l::before { height: 9px; }
.b::before { top: 9px; height: 9px; }
.cell b { position: absolute; z-index: 1; left: 4px; top: 5px; width: 7px; height: 7px; border: 1px solid #808080; background: linear-gradient(#000, #000) center / 5px 1px no-repeat #fff; }
.cell b.plus { background: linear-gradient(#000, #000) center / 5px 1px no-repeat, linear-gradient(#000, #000) center / 1px 5px no-repeat #fff; }
.node { width: 16px; height: 16px; }
.label { margin-left: 3px; padding: 0 1px; line-height: 16px; }
.selected .label { background: #3391ff; color: #fff; outline: 1px dotted #642; outline-offset: -1px; }
.objects { flex: 0 0 201px; background: #fff; border: solid #777; border-width: 2px 0 0 1px; box-shadow: 4px 0 0 #eceef0; }
.objects .tree { padding-left: 1px; }
.current .label { background: #efefef; padding-right: 3px; }
.view { position: relative; flex: 1; min-width: 0; margin-left: -2px; border: solid #777; border-width: 2px 0 0 2px; background: #fff; overflow: hidden; }
.scene { width: 100%; height: 100%; }
.scale { position: absolute; left: 175px; bottom: 1px; width: 246px; }
.rule { display: flex; height: 11px; border: 1px solid #000; }
.rule i { flex: 1; background: #fff; }
.rule i + i { background: #000; }
.ticks { display: flex; justify-content: space-between; margin: 3px -35px 0 -3px; font: 12px/17px "Liberation Sans", sans-serif; color: #222; }

.docked { display: flex; flex: 0 0 111px; gap: 6px; margin-top: 6px; padding-left: 1px; }
.docked .pane { flex: 0 0 547px; }
.docked .pane + .pane { flex: 1; }

.status { display: flex; align-items: center; flex: 0 0 23px; gap: 6px; padding: 0 3px 0 5px; background: #29394f; color: #f2f5fa; font-size: 11px; }
.status span { flex: 1; }
.status button { display: flex; align-items: center; justify-content: space-between; box-sizing: border-box; width: 102px; height: 18px; padding: 0 7px 0 4px; border: 1px solid #5578a8; border-radius: 2px; background: linear-gradient(#eef4fa, #cfdfee 48%, #90c4e2 54%, #78b8dc); color: #000; font-family: Roboto, sans-serif; font-size: 11px; }
.status button.messages { width: 114px; }
.status button svg { width: 12px; height: 10px; }
.sizer { width: 10px; height: 10px; align-self: flex-end; }
</style>
